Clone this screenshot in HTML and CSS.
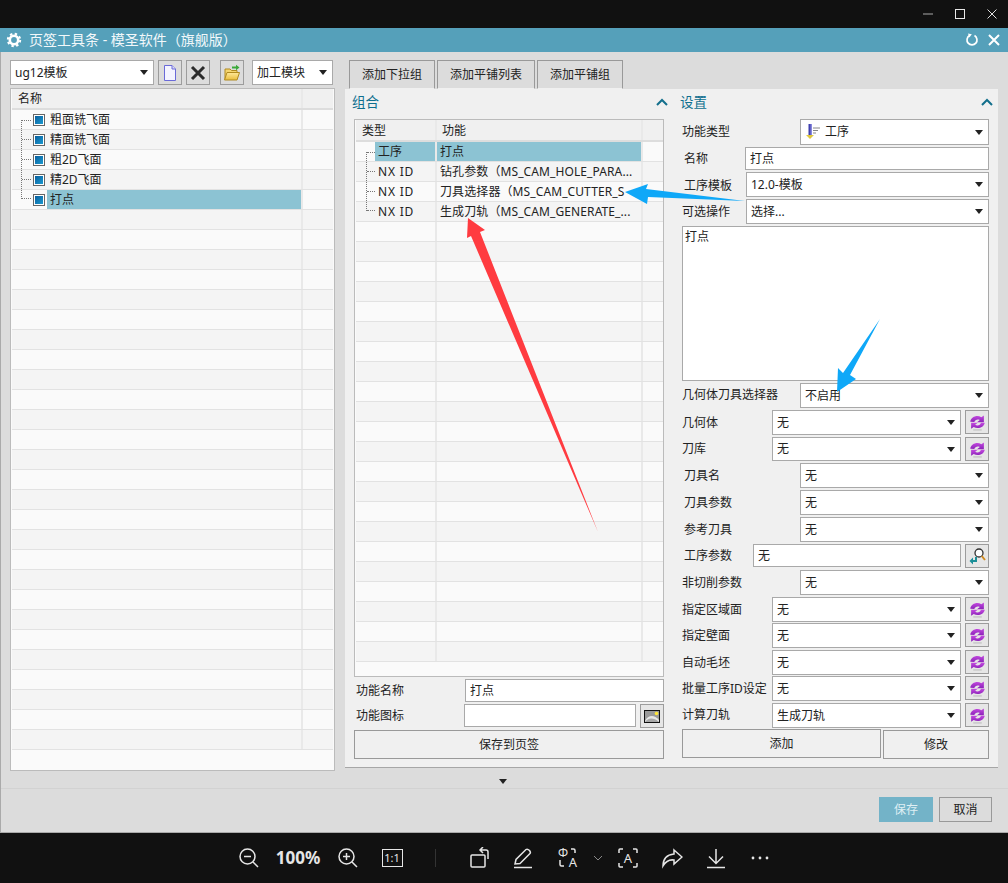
FILE: index.html
```html
<!DOCTYPE html>
<html lang="zh">
<head>
<meta charset="utf-8">
<title>页签工具条</title>
<link rel="stylesheet" href="styles.css">
</head>
<body>
<svg class="defs" width="0" height="0" aria-hidden="true">
  <defs>
    <linearGradient id="blueG" x1="0" y1="0" x2="1" y2="1"><stop offset="0" stop-color="#0a5d9c"/><stop offset="1" stop-color="#1a9ad0"/></linearGradient>
    <linearGradient id="purpleG" x1="0" y1="0" x2="0" y2="1"><stop offset="0" stop-color="#c54ae0"/><stop offset="1" stop-color="#8a22b8"/></linearGradient>
    <linearGradient id="folderG" x1="0" y1="0" x2="0" y2="1"><stop offset="0" stop-color="#ffe89a"/><stop offset="1" stop-color="#e9bd3c"/></linearGradient>
    <symbol id="node" viewBox="0 0 12 12">
      <rect x=".5" y=".5" width="11" height="11" fill="#fff" stroke="#666"/>
      <rect x="2" y="2" width="8" height="8" fill="url(#blueG)"/>
    </symbol>
    <symbol id="sync" viewBox="0 0 16 16">
      <path d="M1.2 7.2C2 2.6 7.6 .6 11.6 3L14 1.4V7.8H7.6L10.2 5.6C8 4.6 5.6 5.4 5 7.6Z" fill="url(#purpleG)"/>
      <path d="M14.8 8.2C14 12.6 8.4 14.6 4.4 12.2L2 13.8V8.2H8.2L5.8 10.2C8 11.4 10.6 10.6 11.2 8.2Z" fill="url(#purpleG)"/>
      <path d="M4 15H12" stroke="#bbb" stroke-width="1"/>
    </symbol>
  </defs>
</svg>

<header class="topbar">
  <svg class="winicon" width="12" height="12" viewBox="0 0 12 12"><path d="M1 6H11" stroke="#777" stroke-width="1.5"/></svg>
  <svg class="winicon" width="12" height="12" viewBox="0 0 12 12"><rect x="1.5" y="1.5" width="9" height="9" fill="none" stroke="#e8e8e8"/></svg>
  <svg class="winicon" width="12" height="12" viewBox="0 0 12 12"><path d="M1.5 1.5L10.5 10.5M10.5 1.5L1.5 10.5" stroke="#ddd"/></svg>
</header>

<div class="window">
  <div class="titlebar">
    <svg class="gear" width="16" height="16" viewBox="0 0 16 16"><circle cx="8" cy="8" r="4.2" fill="none" stroke="#fff" stroke-width="2.6"/><circle cx="8" cy="8" r="6.2" fill="none" stroke="#fff" stroke-width="2" stroke-dasharray="2.4 2.47"/></svg>
    <span class="title">页签工具条 - 模圣软件（旗舰版）</span>
    <svg class="refresh" width="14" height="14" viewBox="0 0 14 14"><path d="M4.5 2.6A5 5 0 1 0 9.5 2.6" fill="none" stroke="#fff" stroke-width="1.7"/><path d="M3 .5L6.8 1.2L4.4 4.6Z" fill="#fff"/></svg>
    <svg class="closex" width="14" height="14" viewBox="0 0 14 14"><path d="M2 2L12 12M12 2L2 12" stroke="#fff" stroke-width="2"/></svg>
  </div>

  <div class="main">
    <section class="leftcol">
      <div class="lefttools">
        <div class="select s-template"><span>ug12模板</span><i class="caret"></i></div>
        <button class="iconbtn"><svg width="16" height="18" viewBox="0 0 16 18"><path d="M2.5 1.5H10L13.5 5V16.5H2.5Z" fill="#f4f4ff" stroke="#6a6ad8"/><path d="M10 1.5V5H13.5" fill="#dcdcf8" stroke="#6a6ad8"/></svg></button>
        <button class="iconbtn"><svg width="16" height="16" viewBox="0 0 16 16"><path d="M2 2L14 14M14 2L2 14" stroke="#2b2b2b" stroke-width="3"/></svg></button>
        <button class="iconbtn gap-left"><svg width="18" height="18" viewBox="0 0 18 18"><path d="M2 15V5H7L8.5 6.5H14V9" fill="#f5d56e" stroke="#b08a20"/><path d="M1.5 16L4 8.5H16.5L14 16Z" fill="url(#folderG)" stroke="#b08a20"/><path d="M9 2.5H13V.8L16.5 3.5L13 6.2V4.5H9Z" fill="#3caa3c"/></svg></button>
        <div class="select s-module"><span>加工模块</span><i class="caret"></i></div>
      </div>
      <div class="tree">
        <div class="thead"><div class="tcell name">名称</div><div class="tcell rest"></div></div>
        <div class="trow"><div class="tcell name"><i class="twig first"></i><svg class="node" width="12" height="12"><use href="#node"/></svg><span class="label">粗面铣飞面</span></div><div class="tcell rest"></div></div>
        <div class="trow"><div class="tcell name"><i class="twig"></i><svg class="node" width="12" height="12"><use href="#node"/></svg><span class="label">精面铣飞面</span></div><div class="tcell rest"></div></div>
        <div class="trow"><div class="tcell name"><i class="twig"></i><svg class="node" width="12" height="12"><use href="#node"/></svg><span class="label">粗2D飞面</span></div><div class="tcell rest"></div></div>
        <div class="trow"><div class="tcell name"><i class="twig"></i><svg class="node" width="12" height="12"><use href="#node"/></svg><span class="label">精2D飞面</span></div><div class="tcell rest"></div></div>
        <div class="trow"><div class="tcell name"><i class="twig last"></i><svg class="node" width="12" height="12"><use href="#node"/></svg><span class="label picked">打点</span></div><div class="tcell rest"></div></div>
        <div class="trow"><div class="tcell name"></div><div class="tcell rest"></div></div>
        <div class="trow"><div class="tcell name"></div><div class="tcell rest"></div></div>
        <div class="trow"><div class="tcell name"></div><div class="tcell rest"></div></div>
        <div class="trow"><div class="tcell name"></div><div class="tcell rest"></div></div>
        <div class="trow"><div class="tcell name"></div><div class="tcell rest"></div></div>
        <div class="trow"><div class="tcell name"></div><div class="tcell rest"></div></div>
        <div class="trow"><div class="tcell name"></div><div class="tcell rest"></div></div>
        <div class="trow"><div class="tcell name"></div><div class="tcell rest"></div></div>
        <div class="trow"><div class="tcell name"></div><div class="tcell rest"></div></div>
        <div class="trow"><div class="tcell name"></div><div class="tcell rest"></div></div>
        <div class="trow"><div class="tcell name"></div><div class="tcell rest"></div></div>
        <div class="trow"><div class="tcell name"></div><div class="tcell rest"></div></div>
        <div class="trow"><div class="tcell name"></div><div class="tcell rest"></div></div>
        <div class="trow"><div class="tcell name"></div><div class="tcell rest"></div></div>
        <div class="trow"><div class="tcell name"></div><div class="tcell rest"></div></div>
        <div class="trow"><div class="tcell name"></div><div class="tcell rest"></div></div>
        <div class="trow"><div class="tcell name"></div><div class="tcell rest"></div></div>
        <div class="trow"><div class="tcell name"></div><div class="tcell rest"></div></div>
        <div class="trow"><div class="tcell name"></div><div class="tcell rest"></div></div>
        <div class="trow"><div class="tcell name"></div><div class="tcell rest"></div></div>
        <div class="trow"><div class="tcell name"></div><div class="tcell rest"></div></div>
        <div class="trow"><div class="tcell name"></div><div class="tcell rest"></div></div>
        <div class="trow"><div class="tcell name"></div><div class="tcell rest"></div></div>
        <div class="trow"><div class="tcell name"></div><div class="tcell rest"></div></div>
        <div class="trow"><div class="tcell name"></div><div class="tcell rest"></div></div>
        <div class="trow"><div class="tcell name"></div><div class="tcell rest"></div></div>
        <div class="trow"><div class="tcell name"></div><div class="tcell rest"></div></div>
      </div>
    </section>

    <section class="rightcol">
      <div class="tabs">
        <button class="tab t1">添加下拉组</button>
        <button class="tab t2">添加平铺列表</button>
        <button class="tab t3">添加平铺组</button>
      </div>
      <div class="panel">
        <div class="group combo">
          <div class="ghead"><span>组合</span><svg width="12" height="8" viewBox="0 0 12 8"><path d="M1 7L6 2L11 7" fill="none" stroke="#136f8c" stroke-width="2"/></svg></div>
          <div class="ftable">
            <div class="fhead"><div class="fcell ftype">类型</div><div class="fcell ffunc">功能</div><div class="fcell fend"></div></div>
            <div class="frow"><div class="fcell ftype"><i class="twig first"></i><span class="ftext picked">工序</span></div><div class="fcell ffunc picked">打点</div><div class="fcell fend"></div></div>
            <div class="frow"><div class="fcell ftype"><i class="twig"></i><span class="ftext nx">NX ID</span></div><div class="fcell ffunc">钻孔参数（MS_CAM_HOLE_PARA...</div><div class="fcell fend"></div></div>
            <div class="frow"><div class="fcell ftype"><i class="twig"></i><span class="ftext nx">NX ID</span></div><div class="fcell ffunc">刀具选择器（MS_CAM_CUTTER_S</div><div class="fcell fend"></div></div>
            <div class="frow"><div class="fcell ftype"><i class="twig last"></i><span class="ftext nx">NX ID</span></div><div class="fcell ffunc">生成刀轨（MS_CAM_GENERATE_...</div><div class="fcell fend"></div></div>
            <div class="frow"><div class="fcell ftype"></div><div class="fcell ffunc"></div><div class="fcell fend"></div></div>
            <div class="frow"><div class="fcell ftype"></div><div class="fcell ffunc"></div><div class="fcell fend"></div></div>
            <div class="frow"><div class="fcell ftype"></div><div class="fcell ffunc"></div><div class="fcell fend"></div></div>
            <div class="frow"><div class="fcell ftype"></div><div class="fcell ffunc"></div><div class="fcell fend"></div></div>
            <div class="frow"><div class="fcell ftype"></div><div class="fcell ffunc"></div><div class="fcell fend"></div></div>
            <div class="frow"><div class="fcell ftype"></div><div class="fcell ffunc"></div><div class="fcell fend"></div></div>
            <div class="frow"><div class="fcell ftype"></div><div class="fcell ffunc"></div><div class="fcell fend"></div></div>
            <div class="frow"><div class="fcell ftype"></div><div class="fcell ffunc"></div><div class="fcell fend"></div></div>
            <div class="frow"><div class="fcell ftype"></div><div class="fcell ffunc"></div><div class="fcell fend"></div></div>
            <div class="frow"><div class="fcell ftype"></div><div class="fcell ffunc"></div><div class="fcell fend"></div></div>
            <div class="frow"><div class="fcell ftype"></div><div class="fcell ffunc"></div><div class="fcell fend"></div></div>
            <div class="frow"><div class="fcell ftype"></div><div class="fcell ffunc"></div><div class="fcell fend"></div></div>
            <div class="frow"><div class="fcell ftype"></div><div class="fcell ffunc"></div><div class="fcell fend"></div></div>
            <div class="frow"><div class="fcell ftype"></div><div class="fcell ffunc"></div><div class="fcell fend"></div></div>
            <div class="frow"><div class="fcell ftype"></div><div class="fcell ffunc"></div><div class="fcell fend"></div></div>
            <div class="frow"><div class="fcell ftype"></div><div class="fcell ffunc"></div><div class="fcell fend"></div></div>
            <div class="frow"><div class="fcell ftype"></div><div class="fcell ffunc"></div><div class="fcell fend"></div></div>
            <div class="frow"><div class="fcell ftype"></div><div class="fcell ffunc"></div><div class="fcell fend"></div></div>
            <div class="frow"><div class="fcell ftype"></div><div class="fcell ffunc"></div><div class="fcell fend"></div></div>
            <div class="frow"><div class="fcell ftype"></div><div class="fcell ffunc"></div><div class="fcell fend"></div></div>
            <div class="frow"><div class="fcell ftype"></div><div class="fcell ffunc"></div><div class="fcell fend"></div></div>
            <div class="frow"><div class="fcell ftype"></div><div class="fcell ffunc"></div><div class="fcell fend"></div></div>
          </div>
          <div class="comborow r-name"><span class="lbl p4">功能名称</span><div class="input grow">打点</div></div>
          <div class="comborow r-icon"><span class="lbl p4">功能图标</span><div class="input grow"></div>
            <button class="iconbtn small"><svg width="16" height="13" viewBox="0 0 16 13"><rect x=".5" y=".5" width="15" height="12" fill="#9a9a9a" stroke="#111"/><path d="M1 11C4 5 10 4 15 10V12H1Z" fill="#e8e8e8"/><path d="M1 12C4 8 9 7 15 12" fill="#a8a8a8"/><circle cx="12.5" cy="3.5" r="1.8" fill="#ffe63a"/></svg></button></div>
          <button class="bigbtn full">保存到页签</button>
        </div>

        <div class="group settings">
          <div class="ghead"><span>设置</span><svg width="12" height="8" viewBox="0 0 12 8"><path d="M1 7L6 2L11 7" fill="none" stroke="#136f8c" stroke-width="2"/></svg></div>
          <div class="form">
            <div class="frm"><span class="lbl w118">功能类型</span><div class="select grow h26"><svg class="drill" width="16" height="16" viewBox="0 0 16 16"><rect x="3.5" y="0" width="3.5" height="11" fill="#3f3fb0"/><rect x="5.5" y="0" width="1.5" height="11" fill="#8a8adc"/><path d="M8 4H15M8 6.5H13M8 9H11" stroke="#888"/><path d="M1 11H9L5 15Z" fill="#e0c83e"/></svg><span>工序</span><i class="caret"></i></div></div>
            <div class="frm"><span class="lbl w63 in2 p4">名称</span><div class="input grow h23">打点</div></div>
            <div class="frm"><span class="lbl w64 in2 low">工序模板</span><div class="select grow"><span>12.0-模板</span><i class="caret"></i></div></div>
            <div class="frm"><span class="lbl w64">可选操作</span><div class="select grow"><span>选择...</span><i class="caret"></i></div></div>
            <div class="frm"><div class="textarea">打点</div></div>
            <div class="frm"><span class="lbl w118 p4">几何体刀具选择器</span><div class="select grow"><span>不启用</span><i class="caret"></i></div></div>
            <div class="frm"><span class="lbl w90">几何体</span><div class="select grow"><span>无</span><i class="caret"></i></div><button class="iconbtn small"><svg width="17" height="17"><use href="#sync"/></svg></button></div>
            <div class="frm"><span class="lbl w90 p4">刀库</span><div class="select grow h24"><span>无</span><i class="caret"></i></div><button class="iconbtn small"><svg width="17" height="17"><use href="#sync"/></svg></button></div>
            <div class="frm"><span class="lbl w118 in2">刀具名</span><div class="select grow"><span>无</span><i class="caret"></i></div></div>
            <div class="frm"><span class="lbl w118 in2">刀具参数</span><div class="select grow"><span>无</span><i class="caret"></i></div></div>
            <div class="frm"><span class="lbl w118 in2">参考刀具</span><div class="select grow"><span>无</span><i class="caret"></i></div></div>
            <div class="frm"><span class="lbl w71 in2 p4">工序参数</span><div class="input grow h23">无</div><button class="iconbtn small"><svg width="18" height="18" viewBox="0 0 18 18"><circle cx="11" cy="6" r="4" fill="#fff" stroke="#333" stroke-width="1.3"/><path d="M13.8 9L17 13" stroke="#d08a20" stroke-width="2"/><path d="M8 10V14H3" fill="none" stroke="#1a8f98" stroke-width="2"/><path d="M5 10.5L1.5 14L5 17.5Z" fill="#1a8f98"/></svg></button></div>
            <div class="frm"><span class="lbl w118">非切削参数</span><div class="select grow"><span>无</span><i class="caret"></i></div></div>
            <div class="frm"><span class="lbl w90">指定区域面</span><div class="select grow"><span>无</span><i class="caret"></i></div><button class="iconbtn small"><svg width="17" height="17"><use href="#sync"/></svg></button></div>
            <div class="frm"><span class="lbl w90">指定壁面</span><div class="select grow"><span>无</span><i class="caret"></i></div><button class="iconbtn small"><svg width="17" height="17"><use href="#sync"/></svg></button></div>
            <div class="frm"><span class="lbl w90">自动毛坯</span><div class="select grow"><span>无</span><i class="caret"></i></div><button class="iconbtn small"><svg width="17" height="17"><use href="#sync"/></svg></button></div>
            <div class="frm"><span class="lbl w90">批量工序ID设定</span><div class="select grow"><span>无</span><i class="caret"></i></div><button class="iconbtn small"><svg width="17" height="17"><use href="#sync"/></svg></button></div>
            <div class="frm"><span class="lbl w90 p4">计算刀轨</span><div class="select grow"><span>生成刀轨</span><i class="caret"></i></div><button class="iconbtn small"><svg width="17" height="17"><use href="#sync"/></svg></button></div>
            <div class="frm actions"><button class="bigbtn add">添加</button><button class="bigbtn edit">修改</button></div>
          </div>
        </div>
      </div>
      <i class="caret expander"></i>
    </section>
  </div>

  <footer class="footer">
    <button class="fbtn primary">保存</button>
    <button class="fbtn cancel">取消</button>
  </footer>
</div>

<nav class="viewer">
  <span class="vbtn w44"><svg width="22" height="22" viewBox="0 0 22 22"><circle cx="9.5" cy="9.5" r="7.5" class="vs"/><path d="M6 9.5H13M15 15L20 20" class="vs"/></svg></span>
  <span class="vpct">100%</span>
  <span class="vbtn w46"><svg width="22" height="22" viewBox="0 0 22 22"><circle cx="9.5" cy="9.5" r="7.5" class="vs"/><path d="M6 9.5H13M9.5 6V13M15 15L20 20" class="vs"/></svg></span>
  <span class="vbtn w42"><span class="oneone">1:1</span></span>
  <i class="vsep"></i>
  <span class="vbtn w44"><svg width="22" height="22" viewBox="0 0 22 22"><rect x="2" y="8" width="14" height="12" rx="1" class="vs"/><path d="M19 12V5Q19 3 17 3H11M14 0L11 3L14 6" class="vs"/></svg></span>
  <span class="vbtn w44"><svg width="22" height="22" viewBox="0 0 22 22"><path d="M2 17L3 12.5L13 2.5Q14.5 1.5 16.5 3.5Q18 5.5 17 6.5L7 16.5Z" class="vs"/><path d="M1 20.5H19" class="vs"/></svg></span>
  <span class="vbtn w44"><svg width="30" height="34" viewBox="-4 -6 30 34"><text x="6" y="10" class="vtext small">Φ</text><path d="M14 2H16.5Q18 2 18 3.5V6M3 13V17.5Q3 19 4.5 19H7" class="vs"/><text x="16" y="20" class="vtext">A</text></svg></span>
  <svg class="vchev" width="16" height="8" viewBox="0 0 16 8"><path d="M4 2L8 6L12 2" fill="none" stroke="#888"/></svg>
  <span class="vbtn w44"><svg width="22" height="22" viewBox="0 0 22 22"><path d="M6 2H3Q2 2 2 3V6M16 2H19Q20 2 20 3V6M2 16V19Q2 20 3 20H6M20 16V19Q20 20 19 20H16" class="vs"/><text x="11" y="15.5" class="vtext">A</text></svg></span>
  <span class="vbtn w44"><svg width="22" height="22" viewBox="0 0 22 22"><path d="M13 3L21 10L13 17V13Q6 12 2 19Q2 8 13 7Z" class="vs"/></svg></span>
  <span class="vbtn w44"><svg width="22" height="22" viewBox="0 0 22 22"><path d="M11 2V16M4 9.5L11 16.5L18 9.5M2 20.5H20" class="vs"/></svg></span>
  <span class="vbtn w44"><svg width="18" height="4" viewBox="0 0 18 4"><circle cx="2" cy="2" r="1.4" fill="#e6e6e6"/><circle cx="9" cy="2" r="1.4" fill="#e6e6e6"/><circle cx="16" cy="2" r="1.4" fill="#e6e6e6"/></svg></span>
</nav>

<svg class="marks" width="1008" height="883" viewBox="0 0 1008 883" aria-hidden="true">
  <path d="M468 218L485 230L480 232L598 532L471 236L467 238Z" fill="#ff3b40"/>
  <path d="M625 192L648 184L646 189L745 201L648 197L647 204Z" fill="#0fa8f8"/>
  <path d="M880 319L850 375L856 379L837 392L838 368L843 373Z" fill="#0fa8f8"/>
</svg>
</body>
</html>
```

FILE: styles.css
```css
* { box-sizing: border-box; }

html, body { margin: 0; padding: 0; }

body {
  position: relative;
  width: 1008px;
  height: 883px;
  overflow: hidden;
  background: #111;
  color: #222;
  font: 12px/16px "Noto Sans", "Noto Sans CJK SC", "Liberation Sans", sans-serif;
}

.defs { display: block; height: 0; }

button { font: inherit; color: inherit; padding: 0; }

/* top strip */
.topbar {
  height: 28px;
  display: flex;
  justify-content: flex-end;
  align-items: center;
  gap: 20px;
  padding-right: 10px;
}

/* window */
.window {
  height: 805px;
  background: #dcdcdc;
  border-left: 1px solid #aaa;
  border-bottom: 1px solid #aaa;
}

.titlebar {
  height: 24px;
  margin-left: -1px;
  background: #55a0ba;
  color: #f2f8fa;
  display: flex;
  align-items: center;
  padding: 0 7px 0 6px;
}

.gear { margin-right: 7px; }
.title { font-size: 14px; flex: 1; }
.refresh { margin-right: 8px; }

.main {
  height: 737px;
  padding: 8px 0 0 9px;
  display: flex;
  gap: 10px;
  border-bottom: 1px solid #d2d2d2;
}

/* left column */
.leftcol { width: 325px; }

.lefttools {
  height: 25px;
  display: flex;
  gap: 4px;
  margin-bottom: 3px;
}

.s-template { width: 144px; }
.s-module { width: 81px; margin-left: 4px; }
.gap-left { margin-left: 6px; }

.select, .input, .textarea {
  background: #fff;
  border: 1px solid #a9a9a9;
  height: 25px;
  display: flex;
  align-items: center;
  padding: 0 5px 0 4px;
  white-space: nowrap;
}

.select { position: relative; }
.select span { flex: 1; }
.h26 { height: 26px; }
.h24 { height: 24px; }
.h23 { height: 23px; }
.grow { flex: 1; min-width: 0; }

.caret {
  display: block;
  width: 0;
  height: 0;
  border: 4px solid transparent;
  border-top: 5px solid #222;
  border-bottom: 0;
}

.iconbtn {
  width: 24px;
  height: 25px;
  background: #dcdcdc;
  border: 1px solid #9c9c9c;
  display: flex;
  align-items: center;
  justify-content: center;
}

.iconbtn.small { margin-left: 4px; height: 24px; background: #e6e6e6; }

/* tree */
.tree {
  height: 683px;
  background: #fafafa;
  border: 1px solid #bbb;
  padding: 0 1px;
  overflow: hidden;
}

.thead, .trow { display: flex; height: 20px; border-bottom: 1px solid #e2e2e2; }
.thead { height: 21px; background: #f0f0f0; border-bottom: 2px solid #ddd; }
.trow:nth-child(odd) { background: #f4f4f4; }
.trow:nth-child(even) { background: #fafafa; }

.tcell { display: flex; align-items: center; }
.tcell.name { width: 291px; border-right: 2px solid #e9e9e9; padding-left: 6px; }
.thead .tcell.name { padding-top: 1px; }
.trow .tcell.name { padding-left: 9px; }
.tcell.rest { flex: 1; }

.twig {
  align-self: stretch;
  width: 10px;
  border-left: 1px dotted #777;
  display: flex;
  align-items: center;
}

.twig::after { content: ""; width: 9px; border-top: 1px dotted #777; }
.twig.first { margin-top: 10px; align-items: flex-start; }
.twig.last { margin-bottom: 10px; align-items: flex-end; }

.node { margin: 0 2px 0 2px; flex: none; }
.label { padding-left: 3px; align-self: stretch; display: flex; align-items: center; flex: 1; }
.picked { background: #8cc3d3; }

/* right column */
.rightcol { width: 653px; }

.tabs { display: flex; height: 29px; padding-left: 4px; gap: 2px; }
.tab { height: 29px; background: #dcdcdc; border: 1px solid #999; border-bottom-color: #f0f0f0; }
.t1 { width: 86px; }
.t2 { width: 98px; }
.t3 { width: 86px; }

.panel {
  height: 679px;
  background: #f0f0f0;
  border-bottom: 1px solid #a6a6a6;
  padding-left: 9px;
  display: flex;
  gap: 18px;
}

.expander { margin: 11px 0 0 154px; }

.group { display: flex; flex-direction: column; }
.combo { width: 310px; }
.settings { width: 307px; }

.ghead {
  height: 30px;
  margin-left: -2px;
  padding-bottom: 4px;
  display: flex;
  align-items: center;
  justify-content: space-between;
  color: #0e6f8f;
  font-size: 13.5px;
}

.ghead svg { margin-right: -4px; }

/* combination table */
.ftable {
  height: 558px;
  background: #fafafa;
  border: 1px solid #bbb;
  padding: 0 0 0 1px;
  overflow: hidden;
}

.fhead, .frow { display: flex; height: 20px; border-bottom: 1px solid #e2e2e2; }
.fhead { height: 22px; background: #f0f0f0; border-bottom: 2px solid #ddd; }
.frow:nth-child(odd) { background: #f4f4f4; }
.frow:nth-child(even) { background: #fafafa; }

.fcell { display: flex; align-items: center; white-space: nowrap; overflow: hidden; }
.ftype { width: 81px; border-right: 2px solid #e9e9e9; }
.ffunc { width: 206px; border-right: 2px solid #e9e9e9; padding-left: 3px; letter-spacing: .1px; }
.fend { flex: 1; }
.fhead .fcell { padding-top: 2px; }
.fhead .ftype { padding-left: 6px; }
.fhead .ffunc { padding-left: 5px; }
.frow .ftype { padding-left: 10px; }
.ftype .twig { width: 9px; }
.ftext { align-self: stretch; flex: 1; display: flex; align-items: center; padding-left: 3px; }
.nx { letter-spacing: .8px; }

.comborow { display: flex; align-items: flex-start; }
.lbl { display: block; flex: none; white-space: nowrap; padding-top: 5px; }
.lbl.p4 { padding-top: 4px; }
.lbl.low { padding-top: 6px; }
.r-name { height: 25px; margin-top: 2px; }
.r-name .lbl { width: 111px; padding-left: 2px; }
.r-name .input { height: 23px; }
.r-icon { height: 26px; }
.r-icon .lbl { width: 110px; padding-left: 2px; }
.r-icon .input { height: 23px; }

.bigbtn {
  background: #f0f0f0;
  border: 1px solid #999;
  height: 29px;
}

.full { width: 310px; }

/* settings form */
.form {
  display: grid;
  grid-template-rows: 28px 25px 27px 27px 157px 27px 27px 26px 27px 27px 27px 26px 27px 26px 27px 26px 27px 26px 30px;
}

.frm { display: flex; align-items: flex-start; min-width: 0; }
.w63 { width: 63px; }
.w64 { width: 64px; }
.w71 { width: 71px; }
.w90 { width: 90px; }
.w118 { width: 118px; }
.in2 { padding-left: 2px; }

.drill { margin-right: 4px; flex: none; }

.textarea {
  width: 100%;
  height: 155px;
  align-items: flex-start;
  padding: 2px;
}

.actions { gap: 2px; align-items: flex-start; }
.add { width: 199px; }
.edit { width: 106px; margin-top: 1px; }

/* footer */
.footer {
  display: flex;
  justify-content: flex-end;
  gap: 6px;
  padding: 8px 16px 0 0;
}

.fbtn {
  width: 54px;
  height: 25px;
  background: #dcdcdc;
  border: 1px solid #999;
}

.fbtn.cancel { width: 53px; }

.primary { background: #73b3c8; border-color: #73b3c8; color: #dfeff4; }

/* viewer toolbar */
.viewer {
  height: 50px;
  padding-left: 227px;
  display: flex;
  align-items: center;
}

.vbtn { display: flex; align-items: center; justify-content: center; flex: none; }
.w44 { width: 44px; }
.w46 { width: 46px; }
.w42 { width: 42px; }

.vs { fill: none; stroke: #e6e6e6; stroke-width: 1.5; }
.vtext { fill: #e6e6e6; font-size: 13px; text-anchor: middle; }
.vtext.small { font-size: 12px; }

.vpct { width: 54px; text-align: center; color: #e6e6e6; font-size: 17px; font-weight: 700; }

.oneone {
  width: 21px;
  height: 18px;
  border: 1.5px solid #e6e6e6;
  color: #e6e6e6;
  font-size: 11px;
  line-height: 15px;
  text-align: center;
}

.vsep { width: 1px; height: 18px; background: #333; margin: 0 22px; }

.vchev { flex: none; }

/* annotations drawn over the screenshot */
.marks { position: absolute; left: 0; top: 0; pointer-events: none; }
```
